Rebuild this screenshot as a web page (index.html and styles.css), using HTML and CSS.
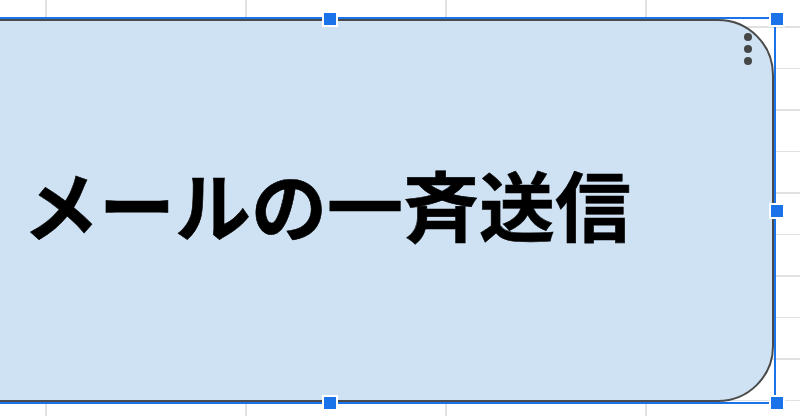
FILE: index.html
```html
<!DOCTYPE html>
<html lang="ja">
<head>
<meta charset="utf-8">
<link rel="stylesheet" href="styles.css">
</head>
<body>
<div class="sheet">
  <div class="shape">
    <div class="label">メールの一斉送信</div>
    <svg class="kebab" width="10" height="34" viewBox="0 0 10 34">
      <circle cx="5" cy="5" r="4" fill="#444746"/>
      <circle cx="5" cy="17" r="4" fill="#444746"/>
      <circle cx="5" cy="29" r="4" fill="#444746"/>
    </svg>
  </div>
  <div class="selection"></div>
  <div class="handle h-tc"></div>
  <div class="handle h-tr"></div>
  <div class="handle h-mr"></div>
  <div class="handle h-bc"></div>
  <div class="handle h-br"></div>
</div>
</body>
</html>
```
FILE: styles.css
```css
html, body {
  margin: 0;
  padding: 0;
  background: #ffffff;
}
.sheet {
  position: relative;
  width: 800px;
  height: 416px;
  overflow: hidden;
  background-color: #ffffff;
  background-image:
    repeating-linear-gradient(to right, transparent 0, transparent 45px, #e1e1e1 45px, #e1e1e1 47px, transparent 47px, transparent 200px),
    repeating-linear-gradient(to bottom, transparent 0, transparent 26px, #e1e1e1 26px, #e1e1e1 27.5px, transparent 27.5px, transparent 41.5px);
  background-position: 0 0, 0 0;
}
.shape {
  position: absolute;
  left: -30px;
  top: 19px;
  width: 804px;
  height: 383px;
  box-sizing: border-box;
  background: #cfe2f3;
  border: 2px solid #4a4a4a;
  border-radius: 0 56px 56px 0;
  display: flex;
  align-items: center;
}
.label {
  padding-left: 51px;
  margin-top: -16px;
  font-family: "Noto Sans CJK JP", "Noto Sans", sans-serif;
  font-weight: 700;
  font-size: 76px;
  line-height: 1;
  color: #000000;
  white-space: nowrap;
  -webkit-text-stroke: 0.6px #000000;
}
.kebab {
  position: absolute;
  right: 19px;
  top: 11px;
}
.selection {
  position: absolute;
  left: -30px;
  top: 17px;
  width: 806px;
  height: 387px;
  box-sizing: border-box;
  border: 2px solid #1a73e8;
  pointer-events: none;
}
.handle {
  position: absolute;
  width: 12px;
  height: 12px;
  background: #1a73e8;
  border: 2px solid #ffffff;
  transform: translate(-50%, -50%);
}
.h-tc { left: 330px; top: 19px; }
.h-tr { left: 777px; top: 19px; }
.h-mr { left: 777px; top: 211px; }
.h-bc { left: 330px; top: 403px; }
.h-br { left: 777px; top: 403px; }
```
